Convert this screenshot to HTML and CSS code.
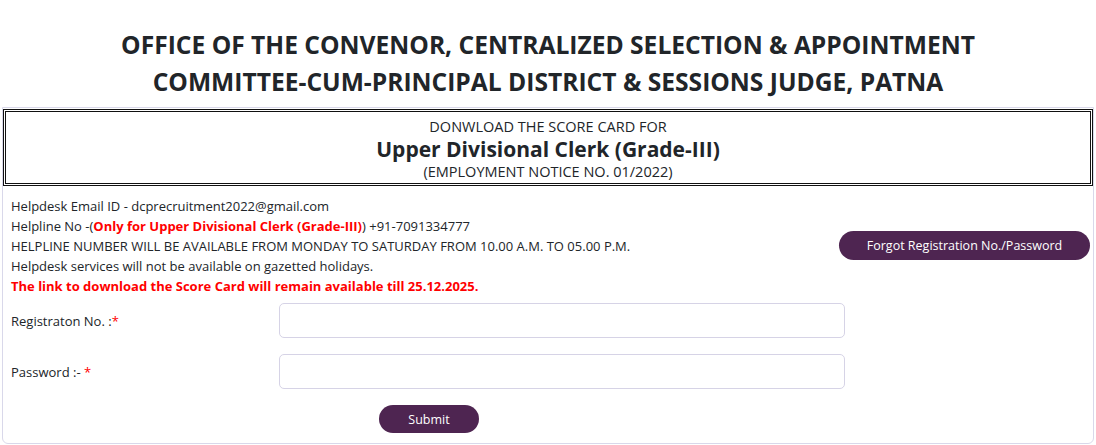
FILE: index.html
```html
<!DOCTYPE html>
<html lang="en">
<head>
<meta charset="utf-8">
<title>Score Card Download</title>
<link rel="stylesheet" href="styles.css">
</head>
<body>
<header class="office">
  <h1>OFFICE OF THE CONVENOR, CENTRALIZED SELECTION &amp; APPOINTMENT<br>COMMITTEE-CUM-PRINCIPAL DISTRICT &amp; SESSIONS JUDGE, PATNA</h1>
</header>
<main class="card">
  <div class="title-box">
    <div class="title-small">DONWLOAD THE SCORE CARD FOR</div>
    <div class="title-post">Upper Divisional Clerk (Grade-III)</div>
    <div class="title-small">(EMPLOYMENT NOTICE NO. 01/2022)</div>
  </div>
  <div class="info-row">
    <div class="info">
      <p>Helpdesk Email ID - dcprecruitment2022@gmail.com</p>
      <p>Helpline No -(<b class="red">Only for Upper Divisional Clerk (Grade-III)</b>) +91-7091334777</p>
      <p>HELPLINE NUMBER WILL BE AVAILABLE FROM MONDAY TO SATURDAY FROM 10.00 A.M. TO 05.00 P.M.</p>
      <p>Helpdesk services will not be available on gazetted holidays.</p>
      <p class="notice">The link to download the Score Card will remain available till 25.12.2025.</p>
    </div>
    <button class="btn btn-forgot" type="button">Forgot Registration No./Password</button>
  </div>
  <form class="login">
    <label class="lbl" for="reg">Registraton No. :<span class="red">*</span></label>
    <input class="field" id="reg" type="text">
    <label class="lbl" for="pwd">Password :- <span class="red">*</span></label>
    <input class="field" id="pwd" type="password">
    <div class="submit-cell"><button class="btn btn-submit" type="button">Submit</button></div>
  </form>
</main>
</body>
</html>
```

FILE: styles.css
```css
* { box-sizing: border-box; }
html, body { margin: 0; padding: 0; background: #fff; }
body {
  font-family: "Open Sans", "Noto Sans", sans-serif;
  color: #212529;
}
.office { padding: 26px 0 7px; }
.office h1 {
  margin: 0;
  text-align: center;
  font-size: 24.6px;
  line-height: 37px;
  font-weight: 700;
  color: #212529;
}
.card {
  margin: 0 2px;
  border: 1px solid #d9d8ea;
  border-radius: 0 0 6px 6px;
  padding: 1px 0 10px;
}
.title-box {
  border: 3px double #111;
  padding: 4px 0 0;
  height: 77px;
  text-align: center;
}
.title-small { font-size: 14.5px; line-height: 21px; }
.title-post { font-size: 21px; line-height: 24px; font-weight: 700; }
.info-row {
  display: flex;
  align-items: flex-start;
  justify-content: space-between;
  padding: 10px 3px 0 8px;
}
.info p { margin: 0; font-size: 13px; line-height: 20px; }
.info b { font-weight: 700; }
.red { color: #f00; }
.info .notice { color: #f00; font-weight: 700; line-height: 21px; }
.btn {
  font-family: inherit;
  background: #4e2551;
  color: #fff;
  border: 0;
  border-radius: 15px;
  font-size: 12.5px;
  height: 29px;
  cursor: pointer;
}
.btn-forgot { width: 251px; margin-top: 35px; }
.btn-submit { width: 100px; height: 28px; }
.login {
  display: grid;
  grid-template-columns: 268px 566px;
  row-gap: 16px;
  align-items: center;
  padding: 6px 0 0 8px;
}
.lbl { font-size: 13px; }
.field {
  height: 35px;
  border: 1px solid #d6d3e6;
  border-radius: 5px;
  background: #fff;
}
.submit-cell { grid-column: 2; padding-left: 100px; }
```
